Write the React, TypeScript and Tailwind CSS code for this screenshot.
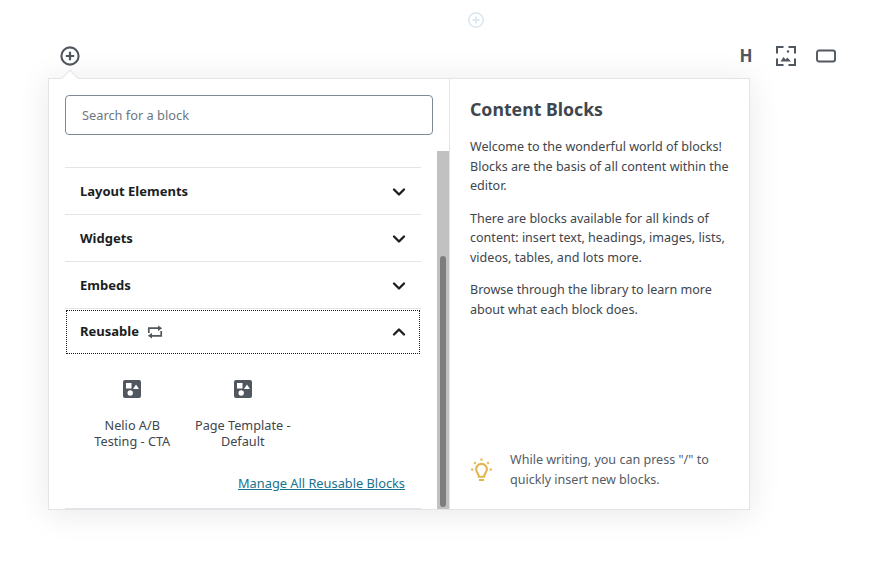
import type { ReactNode } from "react";
import { ChevronDown, ChevronUp } from "lucide-react";

function PlusCircle({ className }: { className: string }) {
  return (
    <svg viewBox="0 0 24 24" className={className} fill="none" stroke="currentColor">
      <circle cx="12" cy="12" r="8.6" strokeWidth="2.1" />
      <path d="M12 7.8v8.4M7.8 12h8.4" strokeWidth="2.2" />
    </svg>
  );
}

function ReusableIcon({ className }: { className: string }) {
  return (
    <svg viewBox="0 0 16 14" className={className} fill="#50575e" stroke="none">
      <path d="M1.8 8V3.2H11" fill="none" stroke="#50575e" strokeWidth="1.7" />
      <path d="M11 0.4L15.2 3.2 11 6z" />
      <path d="M14.2 6V10.8H5" fill="none" stroke="#50575e" strokeWidth="1.7" />
      <path d="M5 8L0.8 10.8 5 13.6z" />
    </svg>
  );
}

function BlockIcon() {
  return (
    <svg viewBox="0 0 18 18" className="h-[18px] w-[18px]">
      <rect width="18" height="18" rx="2" fill="#50575e" />
      <rect x="3" y="3" width="5.5" height="5.5" fill="#fff" />
      <path d="M13 4.5l3 4.5h-6z" fill="#fff" />
      <circle cx="7.2" cy="13" r="2.7" fill="#fff" />
    </svg>
  );
}

function Section({ title }: { title: string }) {
  return (
    <div className="flex h-[47px] items-center justify-between border-t border-[#e2e4e7] pl-[15px] pr-3 pt-[1px]">
      <span className="pt-[1px] text-[13px] font-bold text-[#191e23]">{title}</span>
      <ChevronDown className="h-5 w-5 text-[#191e23]" strokeWidth={2.8} />
    </div>
  );
}

function BlockItem({ children }: { children: ReactNode }) {
  return (
    <div className="flex w-[110.5px] flex-col items-center">
      <BlockIcon />
      <div className="mt-[19px] text-center text-[12.7px] leading-4 text-[#40464d]">{children}</div>
    </div>
  );
}

export default function App() {
  return (
    <div className="h-[567px] w-[878px] overflow-hidden bg-white font-['Noto_Sans',sans-serif]">
      <div className="flex h-[40px] items-center pl-[466px]">
        <PlusCircle className="h-5 w-5 text-[#dfeaf0]" />
      </div>
      <div className="flex h-[38px] items-start justify-between pl-[57.5px] pr-[42px]">
        <PlusCircle className="mt-[4px] h-6 w-6 text-[#50575e]" />
        <div className="flex items-center gap-[19px] pt-[6px] text-[#50575e]">
          <span className="w-[22px] text-center text-[17px] font-bold leading-5">H</span>
          <svg viewBox="0 0 20 20" className="h-5 w-5" fill="none" stroke="currentColor" strokeWidth="2">
            <path d="M7.5 1H1v6.5M12.5 1H19v6.5M7.5 19H1v-6.5M12.5 19H19v-6.5" />
            <circle cx="12" cy="5.5" r="1.2" fill="currentColor" stroke="none" />
            <path d="M4.5 15.5l3-4.5 2.1 2.6 1.7-2 3.7 3.9z" fill="currentColor" stroke="none" />
          </svg>
          <svg viewBox="0 0 20 14" className="ml-[1px] h-[14px] w-[20px]" fill="none" stroke="currentColor" strokeWidth="1.9">
            <rect x="1" y="1.5" width="18" height="11" rx="2" />
          </svg>
        </div>
      </div>
      <div className="relative ml-[48px] flex h-[432px] w-[702px] border border-[#e2e4e7] bg-white shadow-[0_3px_30px_rgba(25,30,35,0.1)]">
        <div className="absolute -top-[7px] left-[15px] h-3 w-3 rotate-45 border-l border-t border-[#e2e4e7] bg-white" />
        <div className="relative flex w-[401px] flex-col overflow-hidden border-r border-[#e2e4e7]">
          <div className="px-4 pt-4">
            <div className="flex h-10 items-center rounded border border-[#7e8993] pl-4 pt-[2px] text-[12.8px] text-[#6c7781]">Search for a block</div>
          </div>
          <div className="ml-4 mr-[28px] mt-8">
            <Section title="Layout Elements" />
            <Section title="Widgets" />
            <Section title="Embeds" />
            <div className="border-t border-[#e2e4e7] px-[1px] pt-[1px]">
              <div className="flex h-[44px] items-center justify-between border border-dotted border-[#191e23] pl-[13px] pr-[10px]">
                <span className="flex items-center gap-2 text-[13px] font-bold text-[#191e23]">
                  Reusable
                  <ReusableIcon className="h-[14px] w-4" />
                </span>
                <ChevronUp className="h-5 w-5 text-[#191e23]" strokeWidth={2.8} />
              </div>
            </div>
            <div className="flex pl-[12px] pt-[26px]">
              <BlockItem>
                Nelio A/B
                <br />
                Testing - CTA
              </BlockItem>
              <BlockItem>
                Page Template -
                <br />
                Default
              </BlockItem>
            </div>
            <div className="pr-4 pt-[23px] text-right leading-[20px]">
              <a className="text-[12.8px] text-[#19728f] underline">Manage All Reusable Blocks</a>
            </div>
            <div className="mt-[15px] border-t-2 border-[#e2e4e7]" />
          </div>
          <div className="absolute bottom-0 right-0 top-[72px] w-3 bg-[#c1c1c1]">
            <div className="absolute bottom-[2px] left-[3px] top-[105px] w-[6px] rounded-[3px] bg-[#7d7d7d]" />
          </div>
        </div>
        <div className="flex flex-1 flex-col px-5 pb-[20px] pt-[18px] text-[12.55px] leading-[19.5px] text-[#40464d]">
          <h2 className="text-[17.7px] font-bold leading-6 text-[#40464d]">Content Blocks</h2>
          <p className="mt-[16px]">Welcome to the wonderful world of blocks! Blocks are the basis of all content within the editor.</p>
          <p className="mt-[13px]">There are blocks available for all kinds of content: insert text, headings, images, lists, videos, tables, and lots more.</p>
          <p className="mt-[13px]">Browse through the library to learn more about what each block does.</p>
          <div className="mt-auto flex items-center gap-[16px]">
            <svg viewBox="0 0 24 24" className="-ml-[1px] h-[25px] w-[25px] shrink-0 text-[#e4b54f]" fill="none" stroke="currentColor" strokeWidth="2">
              <path d="M9.5 19c0-3-2.7-4-2.7-7.2a5.2 5.2 0 0 1 10.4 0c0 3.2-2.7 4.2-2.7 7.2zM9.5 22h5" />
              <path d="M12 1.5v2M2 12h2.2M19.8 12H22M5 5l1.4 1.4M19 5l-1.4 1.4" />
            </svg>
            <p className="text-[#555d66]">While writing, you can press "/" to quickly insert new blocks.</p>
          </div>
        </div>
      </div>
    </div>
  );
}
